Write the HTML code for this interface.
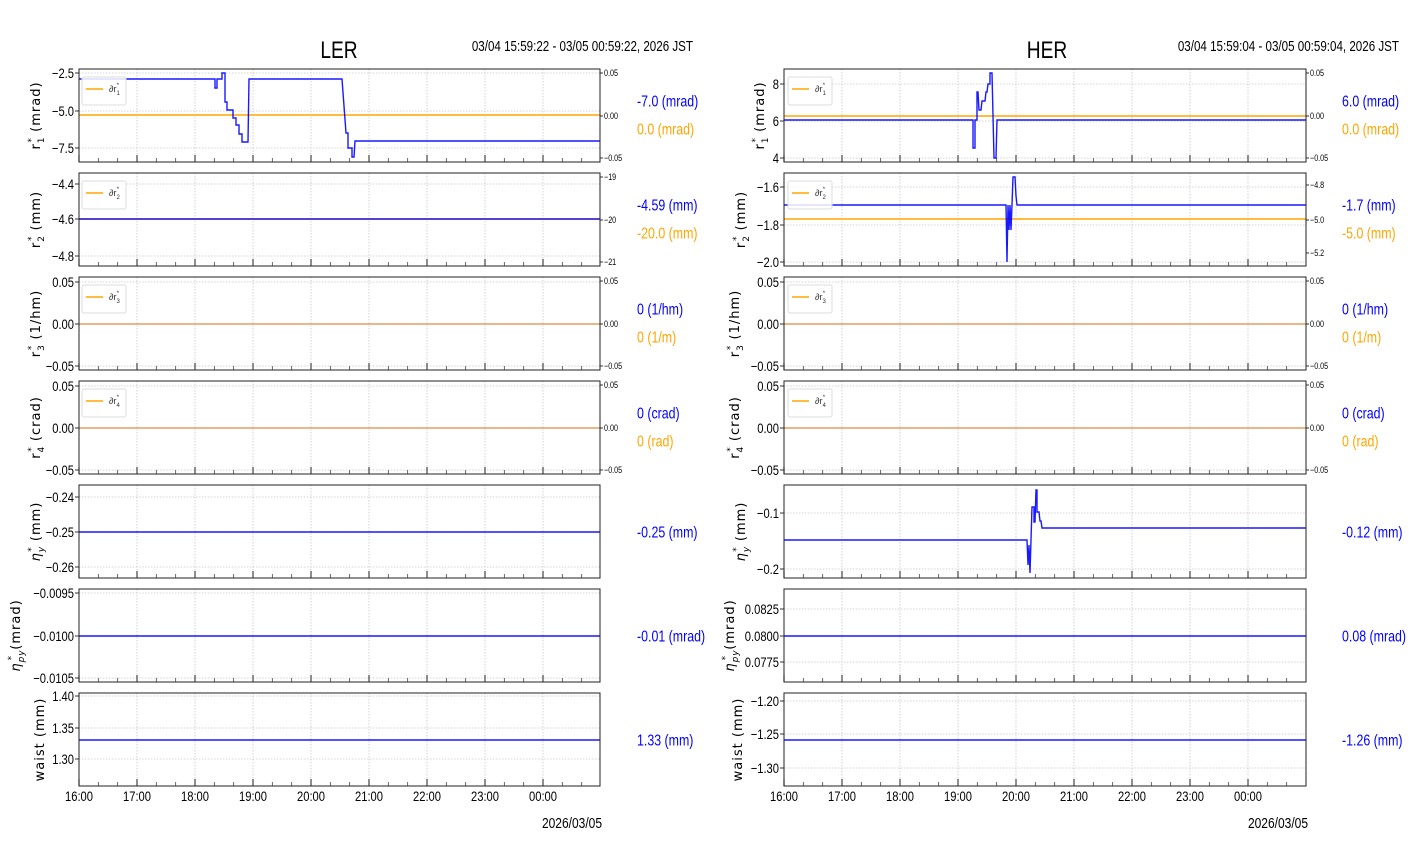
<!DOCTYPE html>
<html><head><meta charset="utf-8"><style>
html,body{margin:0;padding:0;background:#fff;width:1412px;height:864px;overflow:hidden}
svg text{font-family:"Liberation Sans",sans-serif}
.yl{font-family:"DejaVu Sans","Liberation Sans",sans-serif;font-size:13px;letter-spacing:1px}
</style></head><body>
<svg id="s" width="1412" height="864" xmlns="http://www.w3.org/2000/svg"></svg>
<script>
var S=document.getElementById('s'),o='';
function T(x,y,t,a){o+='<text transform="translate('+x+','+y+') scale(0.8,1)" '+(a||'')+'>'+t+'</text>';}
var PY=[[69,162],[173,266],[277,370],[381,474],[485,578],[589,682],[693,786]];
var hrs=['16:00','17:00','18:00','19:00','20:00','21:00','22:00','23:00','00:00'];
var sides=[
{x0:79,x1:600,title:'LER',tx:339,time:'03/04 15:59:22 - 03/05 00:59:22, 2026 JST',tr:693,lx:637,
 yt:[[['-2.5',73],['-5.0',111],['-7.5',148]],[['-4.4',184],['-4.6',219],['-4.8',256]],[['0.05',282],['0.00',324],['-0.05',366]],[['0.05',386],['0.00',428],['-0.05',470]],[['-0.24',497],['-0.25',532],['-0.26',567]],[['-0.0095',593],['-0.0100',636],['-0.0105',678]],[['1.40',696],['1.35',728],['1.30',759]]],
 rt:[[['0.05',73],['0.00',116],['-0.05',158]],[['-19',177],['-20',220],['-21',262]],[['0.05',281],['0.00',324],['-0.05',366]],[['0.05',385],['0.00',428],['-0.05',470]]],
 orange:[115,219,324,428],
 blue:[
  [[79,79],[215,79],[215,88],[217,88],[217,79],[222,79],[222,73],[225,73],[225,102],[227,102],[227,110],[233,110],[233,118],[236,118],[236,125],[239,125],[239,134],[242,134],[242,142],[248,142],[249,79],[342,79],[346,133],[348,133],[348,148],[352,148],[352,157],[354,157],[355,141],[600,141]],
  [[79,219],[600,219]],null,null,[[79,532],[600,532]],[[79,636],[600,636]],[[79,740],[600,740]]],
 lab:[['-7.0 (mrad)','0.0 (mrad)'],['-4.59 (mm)','-20.0 (mm)'],['0 (1/hm)','0 (1/m)'],['0 (crad)','0 (rad)'],['-0.25 (mm)'],['-0.01 (mrad)'],['1.33 (mm)']],
 ylx:[40,40,40,40,40,20,44]},
{x0:784,x1:1306,title:'HER',tx:1047,time:'03/04 15:59:04 - 03/05 00:59:04, 2026 JST',tr:1399,lx:1342,
 yt:[[['8',84],['6',121],['4',158]],[['-1.6',187],['-1.8',225],['-2.0',262]],[['0.05',282],['0.00',324],['-0.05',366]],[['0.05',386],['0.00',428],['-0.05',470]],[['-0.1',513],['-0.2',569]],[['0.0825',609],['0.0800',636],['0.0775',662]],[['-1.20',701],['-1.25',734],['-1.30',768]]],
 rt:[[['0.05',73],['0.00',116],['-0.05',158]],[['-4.8',185],['-5.0',220],['-5.2',253]],[['0.05',281],['0.00',324],['-0.05',366]],[['0.05',385],['0.00',428],['-0.05',470]]],
 orange:[116,219,324,428],
 blue:[
  [[784,120],[973,120],[973,148],[975,148],[975,120],[977,120],[977,92],[978,92],[979,110],[981,110],[982,101],[985,101],[986,92],[987,92],[988,84],[990,84],[990,73],[992,73],[994,158],[996,158],[997,120],[1306,120]],
  [[784,205],[1006,205],[1007,262],[1008,205],[1009,230],[1010,205],[1011,230],[1012,205],[1013,177],[1015,177],[1016,196],[1017,205],[1306,205]],
  null,null,
  [[784,540],[1027,540],[1028,565],[1029,545],[1030,573],[1031,540],[1032,507],[1034,507],[1034,522],[1035,522],[1036,490],[1037,490],[1037,512],[1039,512],[1040,521],[1041,521],[1042,528],[1306,528]],
  [[784,636],[1306,636]],[[784,740],[1306,740]]],
 lab:[['6.0 (mrad)','0.0 (mrad)'],['-1.7 (mm)','-5.0 (mm)'],['0 (1/hm)','0 (1/m)'],['0 (crad)','0 (rad)'],['-0.12 (mm)'],['0.08 (mrad)'],['-1.26 (mm)']],
 ylx:[764,745,739,739,745,734,742]}
];
var ylabs=[['r','1','(mrad)'],['r','2','(mm)'],['r','3','(1/hm)'],['r','4','(crad)'],['η','y','(mm)'],['η','py','(mrad)'],['waist','','(mm)']];
sides.forEach(function(s){
 T(s.tx,58,s.title,'font-size="24" text-anchor="middle"');
 T(s.tr,51,s.time,'font-size="14.5" text-anchor="end"');
 var W=(s.x1-s.x0), hp=58;
 PY.forEach(function(p,i){
  var y0=p[0],y1=p[1];
  for(var h=1;h<9;h++){var x=s.x0+h*hp; o+='<line x1="'+x+'" y1="'+y0+'" x2="'+x+'" y2="'+y1+'" stroke="#c8c8c8" stroke-width="0.8" stroke-dasharray="1.5,1.5"/>';}
  s.yt[i].forEach(function(t){o+='<line x1="'+s.x0+'" y1="'+t[1]+'" x2="'+s.x1+'" y2="'+t[1]+'" stroke="#c8c8c8" stroke-width="0.8" stroke-dasharray="1.5,1.5"/>';
   o+='<line x1="'+(s.x0-4)+'" y1="'+t[1]+'" x2="'+s.x0+'" y2="'+t[1]+'" stroke="#333"/>';
   T(s.x0-5,t[1]+5,t[0].replace('-','−'),'font-size="14" text-anchor="end"');});
  for(var m=0;m<27;m++){var x=s.x0+m*hp/3; if(x>s.x1)break; var L=(m%3==0)?7:4;
   o+='<line x1="'+x+'" y1="'+y1+'" x2="'+x+'" y2="'+(y1-L)+'" stroke="#444" stroke-width="'+(m%3==0?1.2:0.8)+'"/>';}
  if(i<4){var oy=s.orange[i]; o+='<line x1="'+s.x0+'" y1="'+oy+'" x2="'+s.x1+'" y2="'+oy+'" stroke="'+(i>=2?'#e0a060':'#ffa500')+'" stroke-width="1.5"/>';}
  var b=s.blue[i]; if(b){o+='<polyline fill="none" stroke="#0000ff" stroke-width="1.4" stroke-opacity="0.9" points="'+b.map(function(q){return q.join(',')}).join(' ')+'"/>';}
  if(i<4){s.rt[i].forEach(function(t){o+='<line x1="'+s.x1+'" y1="'+t[1]+'" x2="'+(s.x1+3)+'" y2="'+t[1]+'" stroke="#333"/>';T(s.x1+4,t[1]+3,t[0].replace('-','−'),'font-size="9"');});
   var lx=s.x0+3+(s===sides[1]?1:0),ly=y0+8;
   o+='<rect x="'+lx+'" y="'+ly+'" width="44" height="28" rx="2" fill="#fff" fill-opacity="0.85" stroke="#ddd"/>';
   o+='<line x1="'+(lx+4)+'" y1="'+(ly+12)+'" x2="'+(lx+21)+'" y2="'+(ly+12)+'" stroke="#ffa500" stroke-width="1.5"/>';
   o+='<text x="'+(lx+27)+'" y="'+(ly+15)+'" font-size="9" fill="#333">∂r<tspan font-size="6" dy="3">'+(i+1)+'</tspan><tspan font-size="6" dx="-3" dy="-8">*</tspan></text>';}
  o+='<rect x="'+s.x0+'" y="'+y0+'" width="'+W+'" height="'+(y1-y0)+'" fill="none" stroke="#222" stroke-width="1"/>';
  var c=(y0+y1)/2, L=s.lab[i];
  if(L.length==2){T(s.lx,c-9,L[0],'font-size="15.5" fill="#0000ff"');T(s.lx,c+19,L[1],'font-size="15.5" fill="#ffa500"');}
  else T(s.lx,c+6,L[0],'font-size="15.5" fill="#0000ff"');
  var yl=ylabs[i], t;
  if(i<4) t='r<tspan font-size="9" dy="4">'+yl[1]+'</tspan><tspan font-size="9" dx="-6" dy="-10">*</tspan><tspan dy="6"> '+yl[2]+'</tspan>';
  else if(i<6) t='<tspan font-style="italic">η</tspan><tspan font-size="9" font-style="italic" dy="4">'+yl[1]+'</tspan><tspan font-size="9" dx="'+(i==4?-6:-11)+'" dy="-10">*</tspan><tspan dy="6"> '+yl[2]+'</tspan>';
  else t='waist '+yl[2];
  o+='<text class="yl" transform="translate('+s.ylx[i]+','+c+') rotate(-90)" text-anchor="middle">'+t+'</text>';
 });
 hrs.forEach(function(h,k){T(s.x0+k*hp,801,h,'font-size="14" text-anchor="middle"');});
 T(s.x1+2,828,'2026/03/05','font-size="15" text-anchor="end"');
});
S.innerHTML=o;
</script>
</body></html>
